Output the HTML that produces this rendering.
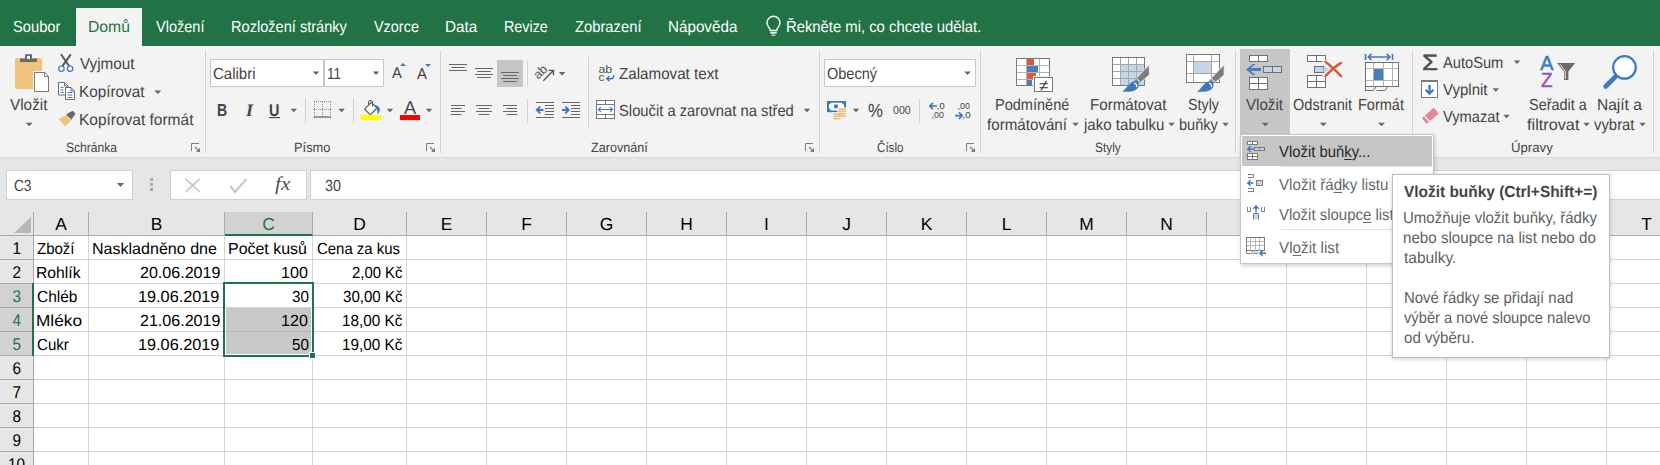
<!DOCTYPE html>
<html lang="cs"><head><meta charset="utf-8"><title>Excel – Vložit buňky</title>
<style>
html,body{margin:0;padding:0}
body{width:1660px;height:465px;overflow:hidden;background:#e6e6e6;font-family:"Liberation Sans",sans-serif}
#app{position:relative;width:1660px;height:465px;overflow:hidden}
.b{position:absolute;display:block}
.t{position:absolute;white-space:nowrap;text-rendering:geometricPrecision;line-height:20px;transform-origin:0 0;display:block}
.t u{text-decoration:underline;text-underline-offset:1.5px;text-decoration-thickness:1px}
.ch{text-rendering:geometricPrecision;position:absolute;top:0;height:23px;line-height:24px;font-size:17.4px;text-align:center;color:#000;border-right:1px solid #ababab;margin-top:0}
.ch.s{background:#d2d2d2;color:#217346;border-bottom:2px solid #217346;height:22px}
.rh{text-rendering:geometricPrecision;position:absolute;left:0;width:33px;height:23px;line-height:25px;font-size:17px;text-align:center;color:#000;border-bottom:1px solid #ababab}
.rh.s{background:#d2d2d2;color:#217346}
.rh span{display:inline-block;transform:scaleX(.9)}
</style></head>
<body><div id="app">
<div class="b" style="left:0px;top:0px;width:1660px;height:46px;background:#217346"></div>
<div class="b" style="left:76px;top:8px;width:66px;height:38px;background:#f3f3f3"></div>
<div class="b" style="left:0px;top:46px;width:1660px;height:111px;background:#f3f3f3"></div>
<div class="b" style="left:0px;top:157px;width:1660px;height:1px;background:#dadada"></div>
<div class="b" style="left:205px;top:50px;width:1px;height:103px;background:#d2d2d2"></div>
<div class="b" style="left:440px;top:50px;width:1px;height:103px;background:#d2d2d2"></div>
<div class="b" style="left:819px;top:50px;width:1px;height:103px;background:#d2d2d2"></div>
<div class="b" style="left:980px;top:50px;width:1px;height:103px;background:#d2d2d2"></div>
<div class="b" style="left:1235px;top:50px;width:1px;height:103px;background:#d2d2d2"></div>
<div class="b" style="left:1412px;top:50px;width:1px;height:103px;background:#d2d2d2"></div>
<div class="b" style="left:1653px;top:50px;width:1px;height:103px;background:#d2d2d2"></div>
<div class="b" style="left:588px;top:57px;width:1px;height:70px;background:#d2d2d2"></div>
<div class="b" style="left:305px;top:98px;width:1px;height:25px;background:#d2d2d2"></div>
<div class="b" style="left:353px;top:98px;width:1px;height:25px;background:#d2d2d2"></div>
<div class="b" style="left:527px;top:61px;width:1px;height:25px;background:#d2d2d2"></div>
<div class="b" style="left:527px;top:98px;width:1px;height:25px;background:#d2d2d2"></div>
<div class="b" style="left:919px;top:98px;width:1px;height:25px;background:#d2d2d2"></div>
<div class="b" style="left:210px;top:59px;width:114px;height:28px;background:#ffffff;border:1px solid #c8c8c8;box-sizing:border-box"></div>
<div class="b" style="left:324px;top:59px;width:60px;height:28px;background:#ffffff;border:1px solid #c8c8c8;box-sizing:border-box"></div>
<div class="b" style="left:824px;top:59px;width:152px;height:28px;background:#ffffff;border:1px solid #c8c8c8;box-sizing:border-box"></div>
<div class="b" style="left:497px;top:60px;width:26px;height:27px;background:#c6c6c6"></div>
<div class="b" style="left:1240px;top:49px;width:50px;height:87px;background:#c6c6c6"></div>
<div class="b" style="left:6px;top:170px;width:127px;height:30px;background:#ffffff;border:1px solid #cfcfcf;box-sizing:border-box"></div>
<div class="b" style="left:170px;top:170px;width:137px;height:30px;background:#ffffff;border:1px solid #cfcfcf;box-sizing:border-box"></div>
<div class="b" style="left:310px;top:170px;width:1360px;height:30px;background:#ffffff;border:1px solid #cfcfcf;box-sizing:border-box"></div>
<div class="b" style="left:150.1px;top:178.3px;width:2.6px;height:2.5px;background:#adadad"></div>
<div class="b" style="left:150.1px;top:183.2px;width:2.6px;height:2.5px;background:#adadad"></div>
<div class="b" style="left:150.1px;top:188.1px;width:2.6px;height:2.5px;background:#adadad"></div>
<div class="b" style="left:34px;top:236px;width:1626px;height:229px;background:#ffffff"></div>
<div class="b" style="left:88px;top:236px;width:1px;height:229px;background:#d4d4d4"></div>
<div class="b" style="left:224px;top:236px;width:1px;height:229px;background:#d4d4d4"></div>
<div class="b" style="left:312px;top:236px;width:1px;height:229px;background:#d4d4d4"></div>
<div class="b" style="left:406px;top:236px;width:1px;height:229px;background:#d4d4d4"></div>
<div class="b" style="left:486px;top:236px;width:1px;height:229px;background:#d4d4d4"></div>
<div class="b" style="left:566px;top:236px;width:1px;height:229px;background:#d4d4d4"></div>
<div class="b" style="left:646px;top:236px;width:1px;height:229px;background:#d4d4d4"></div>
<div class="b" style="left:726px;top:236px;width:1px;height:229px;background:#d4d4d4"></div>
<div class="b" style="left:806px;top:236px;width:1px;height:229px;background:#d4d4d4"></div>
<div class="b" style="left:886px;top:236px;width:1px;height:229px;background:#d4d4d4"></div>
<div class="b" style="left:966px;top:236px;width:1px;height:229px;background:#d4d4d4"></div>
<div class="b" style="left:1046px;top:236px;width:1px;height:229px;background:#d4d4d4"></div>
<div class="b" style="left:1126px;top:236px;width:1px;height:229px;background:#d4d4d4"></div>
<div class="b" style="left:1206px;top:236px;width:1px;height:229px;background:#d4d4d4"></div>
<div class="b" style="left:1286px;top:236px;width:1px;height:229px;background:#d4d4d4"></div>
<div class="b" style="left:1366px;top:236px;width:1px;height:229px;background:#d4d4d4"></div>
<div class="b" style="left:1446px;top:236px;width:1px;height:229px;background:#d4d4d4"></div>
<div class="b" style="left:1526px;top:236px;width:1px;height:229px;background:#d4d4d4"></div>
<div class="b" style="left:1606px;top:236px;width:1px;height:229px;background:#d4d4d4"></div>
<div class="b" style="left:1686px;top:236px;width:1px;height:229px;background:#d4d4d4"></div>
<div class="b" style="left:0px;top:212px;width:1660px;height:24px;background:#e6e6e6;border-bottom:1px solid #ababab;box-sizing:border-box"><div class="ch" style="left:34px;width:54px">A</div><div class="ch" style="left:89px;width:135px">B</div><div class="ch s" style="left:225px;width:87px">C</div><div class="ch" style="left:313px;width:93px">D</div><div class="ch" style="left:407px;width:79px">E</div><div class="ch" style="left:487px;width:79px">F</div><div class="ch" style="left:567px;width:79px">G</div><div class="ch" style="left:647px;width:79px">H</div><div class="ch" style="left:727px;width:79px">I</div><div class="ch" style="left:807px;width:79px">J</div><div class="ch" style="left:887px;width:79px">K</div><div class="ch" style="left:967px;width:79px">L</div><div class="ch" style="left:1047px;width:79px">M</div><div class="ch" style="left:1127px;width:79px">N</div><div class="ch" style="left:1207px;width:79px">O</div><div class="ch" style="left:1287px;width:79px">P</div><div class="ch" style="left:1367px;width:79px">Q</div><div class="ch" style="left:1447px;width:79px">R</div><div class="ch" style="left:1527px;width:79px">S</div><div class="ch" style="left:1607px;width:79px">T</div></div>
<div class="b" style="left:34px;top:259px;width:1626px;height:1px;background:#d4d4d4"></div>
<div class="b" style="left:34px;top:283px;width:1626px;height:1px;background:#d4d4d4"></div>
<div class="b" style="left:34px;top:307px;width:1626px;height:1px;background:#d4d4d4"></div>
<div class="b" style="left:34px;top:331px;width:1626px;height:1px;background:#d4d4d4"></div>
<div class="b" style="left:34px;top:355px;width:1626px;height:1px;background:#d4d4d4"></div>
<div class="b" style="left:34px;top:379px;width:1626px;height:1px;background:#d4d4d4"></div>
<div class="b" style="left:34px;top:403px;width:1626px;height:1px;background:#d4d4d4"></div>
<div class="b" style="left:34px;top:427px;width:1626px;height:1px;background:#d4d4d4"></div>
<div class="b" style="left:34px;top:451px;width:1626px;height:1px;background:#d4d4d4"></div>
<div class="b" style="left:34px;top:475px;width:1626px;height:1px;background:#d4d4d4"></div>
<div class="b" style="left:0px;top:236px;width:34px;height:229px;background:#e6e6e6;border-right:1px solid #ababab;box-sizing:border-box"><div class="rh" style="top:0px"><span>1</span></div><div class="rh" style="top:24px"><span>2</span></div><div class="rh s" style="top:48px"><span>3</span></div><div class="rh s" style="top:72px"><span>4</span></div><div class="rh s" style="top:96px"><span>5</span></div><div class="rh" style="top:120px"><span>6</span></div><div class="rh" style="top:144px"><span>7</span></div><div class="rh" style="top:168px"><span>8</span></div><div class="rh" style="top:192px"><span>9</span></div><div class="rh" style="top:216px"><span>10</span></div></div>
<div class="b" style="left:32px;top:283px;width:2px;height:73px;background:#217346"></div>
<div class="b" style="left:33px;top:212px;width:1px;height:24px;background:#ababab"></div>
<svg class="b" style="left:14px;top:217px" width="17" height="16" viewBox="0 0 17 16"><path d="M17 0V16H0Z" fill="#b7b7b7"/></svg>
<div class="b" style="left:226px;top:308px;width:85px;height:46px;background:#c8c8c8"></div>
<div class="b" style="left:226px;top:331px;width:85px;height:1px;background:#b4b4b4"></div>
<div class="b" style="left:223px;top:282px;width:91px;height:75px;border:2px solid #217346;box-sizing:border-box"></div>
<div class="b" style="left:309px;top:352px;width:7px;height:7px;background:#217346;border:1px solid #fff;box-sizing:border-box"></div>
<svg class="b" style="left:0;top:0" width="1660" height="465" viewBox="0 0 1660 465"><g fill="none" stroke="#fff" stroke-width="1.5" stroke-opacity=".95"><path d="M770.3 30.4c0-2.500-3.300-4-3.300-7.600a6.500 6.500 0 0 1 13 0c0 3.600-3.300 5.100-3.300 7.600z"/><path d="M770.3 32.800h6.400" stroke-width="1.800"/><path d="M771.600 35.200h3.800" stroke-width="1"/></g>
<rect x="15" y="58" width="27" height="31" rx="1.5" fill="#efc37c"/><path d="M20 62V58.5h5V54.2h7v4.3h5V62z" fill="#6a6a6a"/><rect x="27" y="56" width="3" height="3" fill="#f3f3f3"/><path d="M33 71h12.5l4.5 4.5V93H33z" fill="#f3f3f3"/><path d="M34.5 72.5h10.3l3.7 3.7V91.5h-14z" fill="#fff" stroke="#7a7a7a"/><path d="M44.5 72.5v4h4" fill="none" stroke="#7a7a7a"/>
<path d="M25.70 122.7h7l-3.50 3.6z" fill="#666"/>
<path d="M61 54.3L69.3 66.2M70.8 54.3L62.4 66.2" stroke="#5a5a5a" stroke-width="2" fill="none"/><circle cx="61.4" cy="68.7" r="2.7" fill="none" stroke="#3f78bf" stroke-width="1.2"/><circle cx="70.1" cy="68.7" r="2.7" fill="none" stroke="#3f78bf" stroke-width="1.2"/>
<path d="M58.5 82.5h6l3.5 3.5v9h-9.5z" fill="#fff" stroke="#6a6a6a"/><path d="M64.5 82.5v3.5h3.5" fill="none" stroke="#6a6a6a"/><path d="M60.5 87.5h3M60.5 90h3M60.5 92.5h3" stroke="#3f78bf"/><path d="M65.500 87.5h5.500l3.5 3.5v8.500h-9z" fill="#fff" stroke="#6a6a6a"/><path d="M71 87.5v3.5h3.500" fill="none" stroke="#6a6a6a"/><path d="M67.5 92.500h5M67.5 95h5M67.5 97.500h5" stroke="#3f78bf"/>
<path d="M154.30 90.5h7l-3.50 3.6z" fill="#666"/>
<path d="M58.6 118.700L67.200 115.300L70.500 121.500L65 126.300z" fill="#efc37c"/><path d="M66.300 114.300L72.700 110.800L75.500 113.700L70.700 120.600z" fill="#6a6a6a"/><path d="M67.600 116.800L71.200 119.500" stroke="#f3f3f3" stroke-width="1"/>
<path d="M191.5 151V143.5H199" fill="none" stroke="#7d7d7d"/><path d="M195 147L198.5 150.5" fill="none" stroke="#777" stroke-width="1.100"/><path d="M200 148V152H196z" fill="#777"/>
<path d="M426.5 151V143.5H434" fill="none" stroke="#7d7d7d"/><path d="M430 147L433.5 150.5" fill="none" stroke="#777" stroke-width="1.100"/><path d="M435 148V152H431z" fill="#777"/>
<path d="M805.5 151V143.5H813" fill="none" stroke="#7d7d7d"/><path d="M809 147L812.5 150.5" fill="none" stroke="#777" stroke-width="1.100"/><path d="M814 148V152H810z" fill="#777"/>
<path d="M966.5 151V143.5H974" fill="none" stroke="#7d7d7d"/><path d="M970 147L973.5 150.5" fill="none" stroke="#777" stroke-width="1.100"/><path d="M975 148V152H971z" fill="#777"/>
<path d="M312.75 71.5h6.5l-3.25 3.5z" fill="#666"/>
<path d="M372.75 71.5h6.5l-3.25 3.5z" fill="#666"/>
<path d="M964.25 71.5h6.5l-3.25 3.5z" fill="#666"/>
<path d="M400 66h6l-3-3.100z" fill="#3f78bf"/><path d="M425 63.900h6l-3 3.100z" fill="#3f78bf"/>
<path d="M269.1 117.6H280" stroke="#444" stroke-width="1.1"/>
<path d="M290.55 108.8h6.5l-3.25 3.5z" fill="#666"/>
<path d="M338.35 108.8h6.5l-3.25 3.5z" fill="#666"/>
<path d="M386.75 108.8h6.5l-3.25 3.5z" fill="#666"/>
<path d="M425.75 108.8h6.5l-3.25 3.5z" fill="#666"/>
<g stroke="#8c8c8c" stroke-dasharray="1 1" fill="none"><path d="M314 101.500h17M314.500 102v15M330.500 102v15M322.500 102v15M314 109.500h17"/></g><path d="M313.6 117H331" stroke="#5c5c5c" stroke-width="1.2"/>
<rect x="360.800" y="115" width="20.200" height="5.100" fill="#ffff00"/><path d="M371.300 102.300L377 108L370.400 114.600L364.500 109.300z" fill="#fff" stroke="#5a5a5a" stroke-width="1.200" stroke-linejoin="round"/><path d="M368.600 104.800v-2.400a1.950 1.950 0 0 1 3.900 0v4.200" fill="none" stroke="#5a5a5a" stroke-width="1.100"/><path d="M374.900 104.900c3.300.6 5 2.400 5 4.600c0 2-1.200 3.700-2.500 5c.3-3.700-.3-6.400-2.500-9.600z" fill="#3f78bf"/>
<rect x="399.900" y="115" width="20.100" height="5.100" fill="#ff0000"/>
<path d="M449 64.5H467" stroke="#666" stroke-width="1"/>
<path d="M451.2 67.5H464.8" stroke="#666" stroke-width="1"/>
<path d="M449 70.5H467" stroke="#666" stroke-width="1"/>
<path d="M475 68.5H493" stroke="#666" stroke-width="1"/>
<path d="M477.2 71.5H490.8" stroke="#666" stroke-width="1"/>
<path d="M475 74.5H493" stroke="#666" stroke-width="1"/>
<path d="M477.2 77.5H490.8" stroke="#666" stroke-width="1"/>
<path d="M501 72.5H519" stroke="#666" stroke-width="1"/>
<path d="M503.2 75.5H516.8" stroke="#666" stroke-width="1"/>
<path d="M501 78.5H519" stroke="#666" stroke-width="1"/>
<path d="M503.2 81.5H516.8" stroke="#666" stroke-width="1"/>
<g transform="translate(538.300 79.800) rotate(-44)"><text x="0" y="0" font-family="Liberation Sans, sans-serif" font-size="12.500" fill="#555" textLength="14" lengthAdjust="spacingAndGlyphs">ab</text></g><path d="M543.300 80.700L553.300 70.600M548.600 70.400h4.900v4.900" fill="none" stroke="#555" stroke-width="1.400"/>
<path d="M558.85 71.9h6.5l-3.25 3.5z" fill="#666"/>
<path d="M451 105.5H465" stroke="#666" stroke-width="1"/>
<path d="M451 108.5H461.5" stroke="#666" stroke-width="1"/>
<path d="M451 111.5H465" stroke="#666" stroke-width="1"/>
<path d="M451 114.5H461.5" stroke="#666" stroke-width="1"/>
<path d="M476.0 105.5H492.0" stroke="#666" stroke-width="1"/>
<path d="M478.5 108.5H489.5" stroke="#666" stroke-width="1"/>
<path d="M476.0 111.5H492.0" stroke="#666" stroke-width="1"/>
<path d="M478.5 114.5H489.5" stroke="#666" stroke-width="1"/>
<path d="M503 105.5H517" stroke="#666" stroke-width="1"/>
<path d="M506.5 108.5H517.0" stroke="#666" stroke-width="1"/>
<path d="M503 111.5H517" stroke="#666" stroke-width="1"/>
<path d="M506.5 114.5H517.0" stroke="#666" stroke-width="1"/>
<path d="M536 102.5H554" stroke="#666" stroke-width="1"/>
<path d="M536 117.5H554" stroke="#666" stroke-width="1"/>
<path d="M545 105.5H554" stroke="#666" stroke-width="1"/>
<path d="M545 108.5H554" stroke="#666" stroke-width="1"/>
<path d="M545 111.5H554" stroke="#666" stroke-width="1"/>
<path d="M545 114.5H554" stroke="#666" stroke-width="1"/>
<path d="M543.5 110H537M540.2 106.600L536.8 110l3.400 3.400" fill="none" stroke="#3f78bf" stroke-width="2"/>
<path d="M562 102.5H580" stroke="#666" stroke-width="1"/>
<path d="M562 117.5H580" stroke="#666" stroke-width="1"/>
<path d="M571 105.5H580" stroke="#666" stroke-width="1"/>
<path d="M571 108.5H580" stroke="#666" stroke-width="1"/>
<path d="M571 111.5H580" stroke="#666" stroke-width="1"/>
<path d="M571 114.5H580" stroke="#666" stroke-width="1"/>
<path d="M562 110H568.5M565.3 106.600L568.7 110l-3.400 3.400" fill="none" stroke="#3f78bf" stroke-width="2"/>
<text x="598.400" y="72.500" font-family="Liberation Sans, sans-serif" font-size="11.500" fill="#505050" textLength="13.800" lengthAdjust="spacingAndGlyphs">ab</text><text x="598.400" y="80.600" font-family="Liberation Sans, sans-serif" font-size="11.500" fill="#505050">c</text><path d="M613.600 75.200v.800q0 2.700-2.700 2.700H607M609.400 76.200l-2.700 2.500l2.700 2.500" fill="none" stroke="#3f78bf" stroke-width="1.400"/>
<rect x="596.500" y="100.500" width="18" height="18" fill="#fff" stroke="#777"/><path d="M596.500 104.500h18M596.500 114.500h18M605.500 100.500v4M605.500 114.500v4" stroke="#777" fill="none"/><path d="M598.600 109.500h13.800M600.800 107.200l-2.300 2.300l2.300 2.300M610.200 107.200l2.300 2.300l-2.300 2.300" stroke="#3f78bf" stroke-width="1.200" fill="none"/>
<path d="M803.75 108.8h6.5l-3.25 3.5z" fill="#666"/>
<rect x="827" y="101" width="19" height="11.200" fill="#3f78bf"/><path d="M829 104.600q1.600-.3 1.900-1.800h11.200q.3 1.500 1.900 1.800v4q-1.600.3-1.900 1.800h-11.200q-.3-1.500-1.900-1.800z" fill="#fff"/><circle cx="836" cy="106.400" r="2.100" fill="#3f78bf"/><rect x="837.300" y="107.300" width="9.700" height="10.600" fill="#f3f3f3"/><rect x="832.200" y="112.400" width="9.600" height="8.400" fill="#f3f3f3"/>
<rect x="838.4" y="108.30" width="7.600" height="1.600" rx=".8" fill="#e9bf7c"/><rect x="838.4" y="110.60" width="7.600" height="1.600" rx=".8" fill="#e9bf7c"/><rect x="838.4" y="112.90" width="7.600" height="1.600" rx=".8" fill="#e9bf7c"/><rect x="838.4" y="115.20" width="7.600" height="1.600" rx=".8" fill="#e9bf7c"/>
<rect x="833.2" y="113.30" width="7.600" height="1.600" rx=".8" fill="#e9bf7c"/><rect x="833.2" y="115.60" width="7.600" height="1.600" rx=".8" fill="#e9bf7c"/><rect x="833.2" y="117.90" width="7.600" height="1.600" rx=".8" fill="#e9bf7c"/>
<path d="M852.75 108.8h6.5l-3.25 3.5z" fill="#666"/>
<path d="M937 106H930M933 102.800L929.800 106l3.200 3.200" fill="none" stroke="#3f78bf" stroke-width="1.700"/>
<text x="936.5" y="108.6" font-family="Liberation Sans, sans-serif" font-size="8.5" fill="#444" textLength="8.2" lengthAdjust="spacingAndGlyphs">,0</text>
<text x="931.6" y="117.7" font-family="Liberation Sans, sans-serif" font-size="8.5" fill="#444" textLength="12.3" lengthAdjust="spacingAndGlyphs">,00</text>
<path d="M955 115.600h7M959 112.400l3.200 3.200l-3.200 3.200" fill="none" stroke="#3f78bf" stroke-width="1.700"/>
<text x="957.6" y="108.6" font-family="Liberation Sans, sans-serif" font-size="8.5" fill="#444" textLength="12.3" lengthAdjust="spacingAndGlyphs">,00</text>
<text x="962.5" y="117.7" font-family="Liberation Sans, sans-serif" font-size="8.5" fill="#444" textLength="8.2" lengthAdjust="spacingAndGlyphs">,0</text>
<rect x="1016.500" y="58.500" width="33" height="27" fill="#fff" stroke="#7a7a7a"/><path d="M1026.500 59v26M1039.500 59v26M1017 65.500h32M1017 72.500h32M1017 79.500h32" stroke="#b4b4b4" fill="none"/><rect x="1027" y="59" width="7" height="6" fill="#d9593c"/><rect x="1027" y="66" width="11" height="6" fill="#4a7ebb"/><rect x="1027" y="73" width="9" height="6" fill="#d9593c"/><rect x="1027" y="80" width="5" height="5" fill="#4a7ebb"/><rect x="1033" y="76" width="21" height="16.500" fill="#f3f3f3"/><rect x="1034.500" y="77.500" width="18" height="14" fill="#fff" stroke="#7a7a7a"/>
<path d="M1072.25 122.7h6.5l-3.25 3.5z" fill="#666"/>
<path d="M1168.25 122.7h6.5l-3.25 3.5z" fill="#666"/>
<path d="M1222.25 122.7h6.5l-3.25 3.5z" fill="#666"/>
<rect x="1112.500" y="57.500" width="32" height="28" fill="#fff" stroke="#7a7a7a"/><rect x="1120.500" y="64.500" width="24" height="21" fill="#c5d6ea"/><path d="M1120.500 58v27M1128.500 58v27M1136.500 58v27M1113 64.500h31M1113 71.500h31M1113 78.500h31" stroke="#a6a6a6" fill="none"/><rect x="1112.500" y="57.500" width="32" height="28" fill="none" stroke="#7a7a7a"/><g transform="translate(0 0)"><path d="M1149.300 64.800V75L1140.600 82.300L1136.400 78.200z" fill="#7d7d7d" stroke="#f3f3f3" stroke-width=".8"/><path d="M1136.100 78.900l3.700 3.700l-1.600 1.600l-3.700-3.700z" fill="#7d7d7d"/><path d="M1134.300 81.200c2.400-.3 4.600 1.700 4.400 4.300c-.3 3.400-3.600 5.600-7.600 6c-3.200.3-6.400.2-9 0c4.600-2.600 7.200-9.600 12.200-10.300z" fill="#3f78bf"/><path d="M1134.600 83.400c1.400.3 2.300 1.500 1.900 3.100" fill="none" stroke="#fff" stroke-width="1.300" stroke-linecap="round"/></g>
<rect x="1186.500" y="54.500" width="33" height="28" fill="#fff" stroke="#7a7a7a"/><rect x="1193.500" y="61.500" width="18" height="12" fill="#c5d6ea"/><path d="M1193.500 55v27M1211.500 55v27M1187 61.500h32M1187 73.500h32" stroke="#a6a6a6" fill="none"/><g transform="translate(74.8 0)"><path d="M1149.300 64.800V75L1140.600 82.300L1136.400 78.200z" fill="#7d7d7d" stroke="#f3f3f3" stroke-width=".8"/><path d="M1136.100 78.900l3.700 3.700l-1.600 1.600l-3.700-3.700z" fill="#7d7d7d"/><path d="M1134.300 81.200c2.400-.3 4.600 1.700 4.400 4.300c-.3 3.400-3.600 5.600-7.600 6c-3.200.3-6.400.2-9 0c4.600-2.600 7.200-9.600 12.200-10.300z" fill="#3f78bf"/><path d="M1134.600 83.400c1.400.3 2.300 1.500 1.900 3.100" fill="none" stroke="#fff" stroke-width="1.300" stroke-linecap="round"/></g>
<rect x="1249.5" y="55.5" width="18" height="6" fill="#fff" stroke="#707070"/><path d="M1258.5 55.5v6" stroke="#707070"/><rect x="1263.5" y="66.5" width="18" height="6" fill="#c5d6ea" stroke="#707070"/><path d="M1272.5 66.5v6" stroke="#707070"/><rect x="1249.5" y="77.5" width="18" height="12" fill="#fff" stroke="#707070"/><path d="M1258.5 77.5v12" stroke="#707070"/><path d="M1249.5 83.5h18" stroke="#707070"/><path d="M1246 69.500l6.800-5.600h2.600l-4.700 4h10.300v3.200h-10.300l4.700 4h-2.600z" fill="#4a7ebb"/>
<path d="M1261.80 122.7h7l-3.50 3.6z" fill="#666"/>
<path d="M1319.80 122.7h7l-3.50 3.6z" fill="#666"/>
<path d="M1378.00 122.7h7l-3.50 3.6z" fill="#666"/>
<rect x="1307.5" y="55.5" width="18" height="6" fill="#fff" stroke="#707070"/><path d="M1316.5 55.5v6" stroke="#707070"/><rect x="1314.5" y="66.5" width="9.5" height="6" fill="#c5d6ea" stroke="#707070"/><path d="M1324 66.500h1.500l3.500 3l-3.500 3h-1.500z" fill="#c5d6ea"/><rect x="1307.5" y="75.5" width="18" height="12" fill="#fff" stroke="#707070"/><path d="M1316.5 75.5v12" stroke="#707070"/><path d="M1307.5 81.5h18" stroke="#707070"/><rect x="1322.500" y="60" width="5" height="3.500" fill="#f3f3f3"/><rect x="1322.500" y="73.500" width="5" height="3.500" fill="#f3f3f3"/><path d="M1326 62.300C1331 66 1336.500 71.500 1340.800 75.800M1340.600 63.200C1335 66.500 1330 71 1326 75.400" fill="none" stroke="#d9593c" stroke-width="2.500" stroke-linecap="round"/><path d="M1324.800 61.200l3 2.500M1341.800 76.700l-3-2.500M1341.600 62.400l-2.500 1.800M1324.800 76.400l2.500-2.200" fill="none" stroke="#d9593c" stroke-width="1.300" stroke-linecap="round"/>
<path d="M1365.500 54v6M1392.500 54v6M1368.300 57h21.600M1371.500 53.900l-3.200 3.100l3.200 3.100M1386.700 53.900l3.200 3.100l-3.200 3.100" fill="none" stroke="#3f78bf" stroke-width="1.600"/><rect x="1365.500" y="62.500" width="33" height="24" fill="#fff" stroke="#707070"/><path d="M1373.500 63v23M1383.500 63v23M1392.500 63v23M1366 68.500h32M1366 80.500h32" stroke="#b4b4b4" fill="none"/><rect x="1374" y="69" width="9" height="11" fill="#4a7ebb"/><path d="M1365.500 86.500v4h8l2.500-4M1376.500 90.500h8.500l3-4" fill="none" stroke="#707070"/>
<path d="M1513.75 60.6h6.5l-3.25 3.5z" fill="#666"/>
<path d="M1492.55 88.2h6.5l-3.25 3.5z" fill="#666"/>
<path d="M1503.25 114.7h6.5l-3.25 3.5z" fill="#666"/>
<rect x="1421.500" y="81.500" width="16" height="16" fill="#fff" stroke="#7a7a7a"/><path d="M1421 81H1438" stroke="#7a7a7a" stroke-width="2"/><path d="M1429.500 85v8.500M1425.600 89.800l3.900 3.900l3.900-3.900" fill="none" stroke="#3f78bf" stroke-width="2.300"/>
<g transform="rotate(-41 1430.200 115.800)"><rect x="1422.200" y="112" width="16" height="7.600" rx="1.200" fill="#e8859b"/><rect x="1425.200" y="112" width="1.400" height="7.600" fill="#fbe4e9"/></g>
<text x="1540.300" y="69.900" font-family="Liberation Sans, sans-serif" font-size="19.500" stroke="#3f78bf" stroke-width=".500" fill="#3f78bf" textLength="13.200" lengthAdjust="spacingAndGlyphs">A</text><text x="1541" y="87" font-family="Liberation Sans, sans-serif" font-size="19.500" stroke="#9455b8" stroke-width=".500" fill="#9455b8" textLength="11.600" lengthAdjust="spacingAndGlyphs">Z</text><path d="M1557 63h18.200l-6.800 8.600v8.400h-4.400v-8.400z" fill="#6b6b6b"/><path d="M1560 64.300l5.300 7v7.700" fill="none" stroke="#f3f3f3" stroke-width=".9"/>
<path d="M1583.25 122.7h6.5l-3.25 3.5z" fill="#666"/>
<path d="M1639.25 122.7h6.5l-3.25 3.5z" fill="#666"/>
<path d="M1615.600 76.500L1605.600 86.500" stroke="#3f78bf" stroke-width="4.600" stroke-linecap="round"/><circle cx="1624.500" cy="67.400" r="11.300" fill="#fff" stroke="#3f78bf" stroke-width="2.200"/>
<path d="M116.90 183h7.2l-3.60 3.9z" fill="#6b6b6b"/>
<path d="M185.300 178.800L200 191.800M199.600 178.800L185.700 191.800" stroke="#c8c8c8" stroke-width="1.700" fill="none"/><path d="M230.300 185.800l4.600 6.200L246.500 179" stroke="#c8c8c8" stroke-width="2.200" fill="none"/></svg>
<span class="t" style="left:13.00px;top:18px;font-size:16px;color:#ffffff;transform:scaleX(0.9184)">Soubor</span>
<span class="t" style="left:156.00px;top:18px;font-size:16px;color:#ffffff;transform:scaleX(0.9087)">Vložení</span>
<span class="t" style="left:231.09px;top:18px;font-size:16px;color:#ffffff;transform:scaleX(0.9115)">Rozložení stránky</span>
<span class="t" style="left:374.00px;top:18px;font-size:16px;color:#ffffff;transform:scaleX(0.9018)">Vzorce</span>
<span class="t" style="left:445.04px;top:18px;font-size:16px;color:#ffffff;transform:scaleX(0.9575)">Data</span>
<span class="t" style="left:504.10px;top:18px;font-size:16px;color:#ffffff;transform:scaleX(0.8957)">Revize</span>
<span class="t" style="left:575.00px;top:18px;font-size:16px;color:#ffffff;transform:scaleX(0.9229)">Zobrazení</span>
<span class="t" style="left:668.05px;top:18px;font-size:16px;color:#ffffff;transform:scaleX(0.9508)">Nápověda</span>
<span class="t" style="left:786.07px;top:18px;font-size:16px;color:#ffffff;transform:scaleX(0.9264)">Řekněte mi, co chcete udělat.</span>
<span class="t" style="left:87.52px;top:18px;font-size:16px;color:#217346;transform:scaleX(0.9833)">Domů</span>
<span class="t" style="left:10.00px;top:96px;font-size:16px;color:#444444;transform:scaleX(0.9577)">Vložit</span>
<span class="t" style="left:80.00px;top:55px;font-size:16px;color:#444444;transform:scaleX(0.9523)">Vyjmout</span>
<span class="t" style="left:79.04px;top:83px;font-size:16px;color:#444444;transform:scaleX(0.9553)">Kopírovat</span>
<span class="t" style="left:79.03px;top:111px;font-size:16px;color:#444444;transform:scaleX(0.9675)">Kopírovat formát</span>
<span class="t" style="left:66.00px;top:138px;font-size:13.5px;color:#444444;transform:scaleX(0.8953)">Schránka</span>
<span class="t" style="left:213.00px;top:65px;font-size:16px;color:#444444;transform:scaleX(0.9377)">Calibri</span>
<span class="t" style="left:327.46px;top:65px;font-size:16px;color:#444444;transform:scaleX(0.8402)">11</span>
<span class="t" style="left:294.05px;top:138px;font-size:13.5px;color:#444444;transform:scaleX(0.9524)">Písmo</span>
<span class="t" style="left:217.09px;top:100px;font-size:17.4px;color:#444444;transform:scaleX(0.8091);font-weight:700">B</span>
<span class="t" style="left:245.83px;top:100px;font-size:17.4px;color:#444444;transform:scaleX(1.0333);font-weight:700;font-style:italic;font-family:'Liberation Serif', serif">I</span>
<span class="t" style="left:268.95px;top:101px;font-size:17px;color:#444444;transform:scaleX(0.8455);font-weight:700">U</span>
<span class="t" style="left:403.60px;top:98px;font-size:18.5px;color:#444444;transform:scaleX(0.9846)">A</span>
<span class="t" style="left:392.10px;top:64px;font-size:15.5px;color:#444444;transform:scaleX(0.9455)">A</span>
<span class="t" style="left:417.10px;top:65px;font-size:15.5px;color:#444444;transform:scaleX(0.9545)">A</span>
<span class="t" style="left:619.00px;top:65px;font-size:16px;color:#444444;transform:scaleX(0.9480)">Zalamovat text</span>
<span class="t" style="left:619.00px;top:102px;font-size:16px;color:#444444;transform:scaleX(0.9229)">Sloučit a zarovnat na střed</span>
<span class="t" style="left:591.00px;top:138px;font-size:13.5px;color:#444444;transform:scaleX(0.9339)">Zarovnání</span>
<span class="t" style="left:827.00px;top:65px;font-size:16px;color:#444444;transform:scaleX(0.9068)">Obecný</span>
<span class="t" style="left:868.00px;top:102px;font-size:19px;color:#444444;transform:scaleX(0.8824)">%</span>
<span class="t" style="left:892.80px;top:101px;font-size:11.5px;color:#444444;transform:scaleX(0.9206)">000</span>
<span class="t" style="left:877.00px;top:138px;font-size:13.5px;color:#444444;transform:scaleX(0.8595)">Číslo</span>
<span class="t" style="left:995.09px;top:96px;font-size:16px;color:#444444;transform:scaleX(0.9081)">Podmíněné</span>
<span class="t" style="left:987.00px;top:116px;font-size:16px;color:#444444;transform:scaleX(0.9466)">formátování</span>
<span class="t" style="left:1090.06px;top:96px;font-size:16px;color:#444444;transform:scaleX(0.9445)">Formátovat</span>
<span class="t" style="left:1083.94px;top:116px;font-size:16px;color:#444444;transform:scaleX(0.9416)">jako tabulku</span>
<span class="t" style="left:1188.00px;top:96px;font-size:16px;color:#444444;transform:scaleX(0.8941)">Styly</span>
<span class="t" style="left:1179.09px;top:116px;font-size:16px;color:#444444;transform:scaleX(0.9114)">buňky</span>
<span class="t" style="left:1095.00px;top:138px;font-size:13.5px;color:#444444;transform:scaleX(0.8812)">Styly</span>
<span class="t" style="left:1246.00px;top:96px;font-size:16px;color:#444444;transform:scaleX(0.9451)">Vložit</span>
<span class="t" style="left:1293.00px;top:96px;font-size:16px;color:#444444;transform:scaleX(0.9088)">Odstranit</span>
<span class="t" style="left:1358.09px;top:96px;font-size:16px;color:#444444;transform:scaleX(0.9059)">Formát</span>
<span class="t" style="left:1443.00px;top:54px;font-size:16px;color:#444444;transform:scaleX(0.9162)">AutoSum</span>
<span class="t" style="left:1443.00px;top:81px;font-size:16px;color:#444444;transform:scaleX(0.9378)">Vyplnit</span>
<span class="t" style="left:1443.00px;top:108px;font-size:16px;color:#444444;transform:scaleX(0.9164)">Vymazat</span>
<span class="t" style="left:1529.00px;top:96px;font-size:16px;color:#444444;transform:scaleX(0.9043)">Seřadit a</span>
<span class="t" style="left:1527.00px;top:116px;font-size:16px;color:#444444;transform:scaleX(1.0168)">filtrovat</span>
<span class="t" style="left:1597.03px;top:96px;font-size:16px;color:#444444;transform:scaleX(0.9704)">Najít a</span>
<span class="t" style="left:1594.00px;top:116px;font-size:16px;color:#444444;transform:scaleX(0.9292)">vybrat</span>
<span class="t" style="left:1511.02px;top:138px;font-size:13.5px;color:#444444;transform:scaleX(0.9759)">Úpravy</span>
<span class="t" style="left:1421.63px;top:53px;font-size:22.2px;color:#4d4d4d;transform:scaleX(1.1667);-webkit-text-stroke:.5px #4d4d4d">Σ</span>
<span class="t" style="left:1038.60px;top:77px;font-size:16px;color:#3c3c3c;transform:scaleX(1.0889)">≠</span>
<span class="t" style="left:13.90px;top:177px;font-size:16px;color:#444444;transform:scaleX(0.8514)">C3</span>
<span class="t" style="left:325.00px;top:177px;font-size:16px;color:#444444;transform:scaleX(0.8939)">30</span>
<span class="t" style="left:274.50px;top:175px;font-size:19.5px;color:#4f4f4f;transform:scaleX(1.0889);font-style:italic;font-family:'Liberation Serif', serif">fx</span>
<span class="t" style="left:37.00px;top:240px;font-size:16px;color:#000000;transform:scaleX(0.9366)">Zboží</span>
<span class="t" style="left:92.00px;top:240px;font-size:16px;color:#000000;transform:scaleX(1.0029)">Naskladněno dne</span>
<span class="t" style="left:228.00px;top:240px;font-size:16px;color:#000000;transform:scaleX(0.9967)">Počet kusů</span>
<span class="t" style="left:317.00px;top:240px;font-size:16px;color:#000000;transform:scaleX(0.9332)">Cena za kus</span>
<span class="t" style="left:36.02px;top:264px;font-size:16px;color:#000000;transform:scaleX(0.9812)">Rohlík</span>
<span class="t" style="left:139.50px;top:264px;font-size:16px;color:#000000;transform:scaleX(1.0040)">20.06.2019</span>
<span class="t" style="left:281.49px;top:264px;font-size:16px;color:#000000;transform:scaleX(1.0079)">100</span>
<span class="t" style="left:352.00px;top:264px;font-size:16px;color:#000000;transform:scaleX(0.9307)">2,00 Kč</span>
<span class="t" style="left:37.00px;top:288px;font-size:16px;color:#000000;transform:scaleX(0.9664)">Chléb</span>
<span class="t" style="left:138.48px;top:288px;font-size:16px;color:#000000;transform:scaleX(1.0167)">19.06.2019</span>
<span class="t" style="left:291.50px;top:288px;font-size:16px;color:#000000;transform:scaleX(0.9498)">30</span>
<span class="t" style="left:343.00px;top:288px;font-size:16px;color:#000000;transform:scaleX(0.9421)">30,00 Kč</span>
<span class="t" style="left:35.92px;top:312px;font-size:16px;color:#000000;transform:scaleX(1.0770)">Mléko</span>
<span class="t" style="left:139.50px;top:312px;font-size:16px;color:#000000;transform:scaleX(1.0040)">21.06.2019</span>
<span class="t" style="left:281.49px;top:312px;font-size:16px;color:#000000;transform:scaleX(1.0079)">120</span>
<span class="t" style="left:342.04px;top:312px;font-size:16px;color:#000000;transform:scaleX(0.9573)">18,00 Kč</span>
<span class="t" style="left:37.00px;top:336px;font-size:16px;color:#000000;transform:scaleX(0.9433)">Cukr</span>
<span class="t" style="left:138.48px;top:336px;font-size:16px;color:#000000;transform:scaleX(1.0167)">19.06.2019</span>
<span class="t" style="left:291.50px;top:336px;font-size:16px;color:#000000;transform:scaleX(0.9498)">50</span>
<span class="t" style="left:342.04px;top:336px;font-size:16px;color:#000000;transform:scaleX(0.9573)">19,00 Kč</span>
<!-- menu -->
<div class="b" style="left:1240px;top:134px;width:194px;height:130px;background:#ffffff;border:1px solid #c6c6c6;box-sizing:border-box;box-shadow:1px 2px 4px rgba(0,0,0,.18)"></div>
<div class="b" style="left:1242px;top:136px;width:190px;height:30px;background:#c6c6c6"></div>
<div class="b" style="left:1281px;top:229px;width:152px;height:1px;background:#e1e1e1"></div>
<div class="b" style="left:1281px;top:166px;width:152px;height:1px;background:#e2e2e2"></div>
<svg class="b" style="left:0;top:0" width="1660" height="465" viewBox="0 0 1660 465"><rect x="1247.5" y="141.5" width="10" height="3" fill="#fff" stroke="#707070" stroke-width=".9"/><path d="M1252.500 141.500v3" stroke="#707070" stroke-width=".9"/><rect x="1254.5" y="147.5" width="10" height="3" fill="#c5d6ea" stroke="#707070" stroke-width=".9"/><path d="M1259.500 147.500v3" stroke="#707070" stroke-width=".9"/><rect x="1247.5" y="153.5" width="10" height="6" fill="#fff" stroke="#707070" stroke-width=".9"/><path d="M1252.500 153.500v6M1247.500 156.500h10" stroke="#707070" stroke-width=".9"/><path d="M1253.500 149H1248M1250.600 146.300L1247.800 149l2.800 2.700" fill="none" stroke="#3f78bf" stroke-width="1.500"/>
<path d="M1248 174.500h5.500v3H1248M1248 188.500h5.500v3H1248" fill="none" stroke="#707070" stroke-width=".9"/><rect x="1256.5" y="180.5" width="6" height="5" fill="#c5d6ea" stroke="#707070" stroke-width=".9"/><path d="M1253.500 183H1248M1250.600 180.300L1247.800 183l2.800 2.700" fill="none" stroke="#3f78bf" stroke-width="1.500"/>
<path d="M1247.500 207v4.500h3V207M1261.500 207v4.500h3V207" fill="none" stroke="#707070" stroke-width=".9"/><path d="M1253.500 219.500v-6h5v6" fill="#c5d6ea" stroke="#707070" stroke-width=".9"/><path d="M1256 212.500V206.300M1253.300 208.800L1256 206.100l2.700 2.700" fill="none" stroke="#3f78bf" stroke-width="1.500"/>
<rect x="1246.500" y="237.500" width="18" height="13" fill="#fff" stroke="#707070" stroke-width=".9"/><path d="M1250.500 238v12.500M1255.500 238v12.500M1259.500 238v12.500M1247 241.500h17.500M1247 245.500h17.500" stroke="#b0b0b0" stroke-width=".9" fill="none"/><path d="M1246.500 250.500v3h5l1-3M1253 253.500h4.500l.7-1.500" fill="none" stroke="#707070" stroke-width=".9"/><rect x="1253.300" y="251.200" width="4.500" height="2" fill="#c5d6ea"/><path d="M1266 253.300H1260M1262.700 250.600L1259.900 253.300l2.800 2.700" fill="none" stroke="#3f78bf" stroke-width="1.500"/></svg>
<span class="t" style="left:1279.00px;top:143px;font-size:16px;color:#262626;transform:scaleX(0.9281)">Vložit buň<u>k</u>y...</span>
<span class="t" style="left:1279.00px;top:176px;font-size:16px;color:#686868;transform:scaleX(0.9460)">Vložit řá<u>d</u>ky listu</span>
<span class="t" style="left:1279.30px;top:206px;font-size:16px;color:#686868;transform:scaleX(0.9350)">Vložit sloupc<u>e</u> listu</span>
<span class="t" style="left:1279.30px;top:239px;font-size:16px;color:#686868;transform:scaleX(0.9532)">Vl<u>o</u>žit list</span>
<!-- tooltip -->
<div class="b" style="left:1392px;top:174px;width:218px;height:184px;background:#ffffff;border:1px solid #bebebe;box-sizing:border-box;box-shadow:0 1px 4px rgba(0,0,0,.2)"></div>
<span class="t" style="left:1404.00px;top:183px;font-size:16px;color:#444444;transform:scaleX(0.9644);font-weight:700">Vložit buňky (Ctrl+Shift+=)</span>
<span class="t" style="left:1403.06px;top:209px;font-size:16px;color:#5f5f5f;transform:scaleX(0.9374)">Umožňuje vložit buňky, řádky</span>
<span class="t" style="left:1403.05px;top:229px;font-size:16px;color:#5f5f5f;transform:scaleX(0.9467)">nebo sloupce na list nebo do</span>
<span class="t" style="left:1404.00px;top:249px;font-size:16px;color:#5f5f5f;transform:scaleX(0.9713)">tabulky.</span>
<span class="t" style="left:1404.07px;top:289px;font-size:16px;color:#5f5f5f;transform:scaleX(0.9330)">Nové řádky se přidají nad</span>
<span class="t" style="left:1404.00px;top:309px;font-size:16px;color:#5f5f5f;transform:scaleX(0.9192)">výběr a nové sloupce nalevo</span>
<span class="t" style="left:1404.00px;top:329px;font-size:16px;color:#5f5f5f;transform:scaleX(0.9418)">od výběru.</span>
</div></body></html>
